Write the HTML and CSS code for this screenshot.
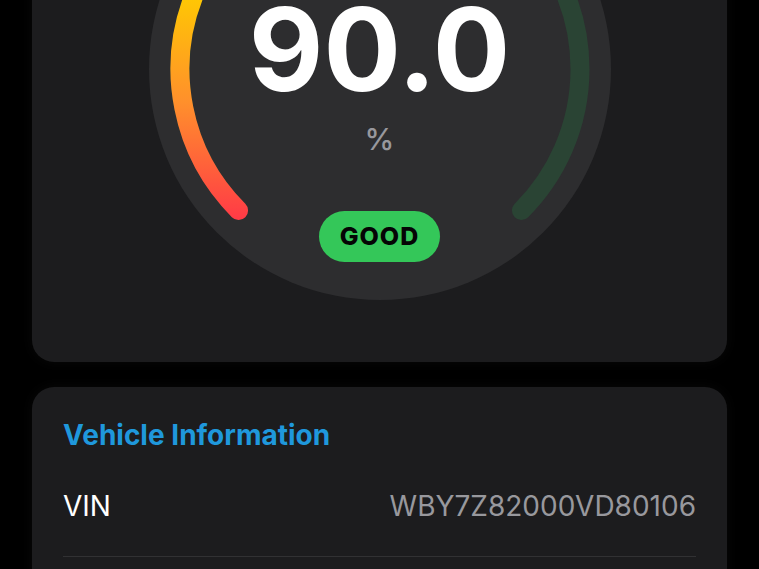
FILE: index.html
```html
<!DOCTYPE html>
<html lang="en">
<head>
<meta charset="utf-8">
<title>Battery Health</title>
<link rel="stylesheet" href="styles.css">
</head>
<body>
<main class="screen">
  <section class="card gauge-card">
    <div class="gauge">
      <svg class="gauge-ring" viewBox="0 0 462 462" width="462" height="462" aria-hidden="true">
        <defs>
          <linearGradient id="warm" gradientUnits="userSpaceOnUse" x1="0" y1="380" x2="0" y2="150">
            <stop offset="0" stop-color="#ff3b46"/>
            <stop offset="0.5" stop-color="#ff8f2c"/>
            <stop offset="1" stop-color="#ffcc00"/>
          </linearGradient>
        </defs>
        <path class="track" d="M 89.58 372.42 A 200 200 0 1 1 372.42 372.42"/>
        <path class="progress" d="M 89.58 372.42 A 200 200 0 0 1 231 31" stroke="url(#warm)"/>
      </svg>
      <div class="value">90.0</div>
      <div class="unit">%</div>
      <div class="badge">GOOD</div>
    </div>
  </section>

  <section class="card info-card">
    <h2 class="info-title">Vehicle Information</h2>
    <div class="info-row">
      <span class="info-label">VIN</span>
      <span class="info-value">WBY7Z82000VD80106</span>
    </div>
  </section>
</main>
</body>
</html>
```

FILE: styles.css
```css
* { box-sizing: border-box; }

html, body {
  margin: 0;
  background: #000;
}

body {
  font-family: Inter, "Liberation Sans", sans-serif;
  color: #fff;
  overflow: hidden;
}

.screen {
  display: flex;
  flex-direction: column;
  gap: 25px;
  padding: 0 32px;
  margin-top: -186px;
}

.card {
  background: #1c1c1e;
  border-radius: 22px;
  box-shadow: 0 0 14px rgba(255, 255, 255, 0.035);
}

.gauge-card {
  display: flex;
  justify-content: center;
  padding: 24px 0 62px;
}

.gauge {
  position: relative;
  width: 462px;
  height: 462px;
  border-radius: 50%;
  background: #2d2d2f;
  display: flex;
  flex-direction: column;
  align-items: center;
  padding-top: 167px;
}

.gauge-ring {
  position: absolute;
  left: 0;
  top: 0;
}

.track,
.progress {
  fill: none;
  stroke-width: 19;
  stroke-linecap: round;
}

.track {
  stroke: #2a4434;
}

.value {
  position: relative;
  font-size: 115px;
  font-weight: 700;
  line-height: 90px;
  color: #fff;
}

.unit {
  position: relative;
  margin-top: 29px;
  font-size: 30px;
  font-weight: 500;
  line-height: 30px;
  color: #98989d;
}

.badge {
  position: relative;
  margin-top: 57px;
  height: 51px;
  padding: 0 21px;
  border-radius: 26px;
  background: #34c759;
  color: #050505;
  font-size: 25px;
  font-weight: 800;
  line-height: 51px;
  letter-spacing: 1px;
}

.info-card {
  padding: 31px 31px 40px;
}

.info-title {
  margin: 0 0 4px;
  font-size: 28px;
  font-weight: 700;
  line-height: 34px;
  color: #1f98dc;
}

.info-row {
  display: flex;
  justify-content: space-between;
  align-items: baseline;
  padding: 33px 0;
  border-bottom: 1px solid #313133;
  font-size: 28px;
  line-height: 34px;
}

.info-label {
  color: #fff;
}

.info-value {
  color: #98989d;
}
```
